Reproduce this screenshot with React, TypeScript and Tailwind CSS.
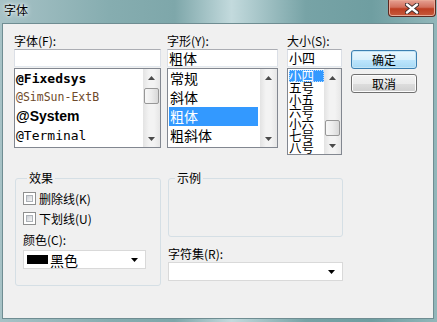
import React from 'react'

const cjk = "font-['Noto_Sans_CJK_SC',sans-serif]"

function Tri({ up = false, color = '#000' }: { up?: boolean; color?: string }) {
  return (
    <svg width="7" height="4" viewBox="0 0 7 4" className="block">
      <path d={up ? 'M3.5 0L7 4H0z' : 'M0 0h7L3.5 4z'} fill={color} />
    </svg>
  )
}

// win7 style vertical scrollbar, thumbClass carries the margin that places the thumb
function ScrollBar({ thumbClass }: { thumbClass?: string }) {
  return (
    <div className="flex w-[17px] flex-col bg-[linear-gradient(90deg,#e3e3e3,#f3f3f3_35%,#f3f3f3_65%,#e6e6e6)]">
      <div className="flex h-[17px] items-center justify-center">
        <Tri up color="#4a4a4a" />
      </div>
      <div className="flex-1">
        {thumbClass && (
          <div
            className={`mx-[1px] h-[16px] rounded-[2px] border border-[#979797] bg-[linear-gradient(90deg,#f7f7f7,#ececec_50%,#d8d8d8)] ${thumbClass}`}
          />
        )}
      </div>
      <div className="flex h-[17px] items-center justify-center">
        <Tri color="#4a4a4a" />
      </div>
    </div>
  )
}

function ListBox({ className, thumbClass, children }: { className: string; thumbClass?: string; children: React.ReactNode }) {
  return (
    <div className={`flex border border-[#828790] bg-white ${className}`}>
      <div className="flex-1 overflow-hidden">{children}</div>
      <ScrollBar thumbClass={thumbClass} />
    </div>
  )
}

function TextBox({ className, value }: { className: string; value?: string }) {
  return (
    <div
      className={`h-[18px] border border-[#abadb3] border-x-[#dbdfe6] border-b-[#e3e9ef] bg-white pl-[1px] text-[13px] leading-[16px] ${className}`}
    >
      {value}
    </div>
  )
}

function WinButton({ label, isDefault = false }: { label: string; isDefault?: boolean }) {
  return (
    <button
      className={`h-[19px] w-[66px] rounded-[3px] border text-[12px] leading-[17px] text-black ${
        isDefault
          ? 'border-[#3c7fb1] bg-[linear-gradient(180deg,#eaf6fd_0%,#d9f0fc_50%,#bee6fd_51%,#a7d9f5_100%)] shadow-[inset_0_0_0_1px_#c4e5f6]'
          : 'border-[#707070] bg-[linear-gradient(180deg,#f2f2f2_0%,#ebebeb_50%,#dddddd_51%,#cfcfcf_100%)] shadow-[inset_0_0_0_1px_#fcfcfc]'
      }`}
    >
      {label}
    </button>
  )
}

function CheckBox({ label }: { label: string }) {
  return (
    <div className="flex h-[13px] items-center gap-[3px]">
      <div className="h-[13px] w-[13px] border border-[#8e8f8f] bg-white p-[2px]">
        <div className="h-full w-full border border-[#aeb3b9] bg-[linear-gradient(135deg,#cbcfd5,#f6f6f6)]" />
      </div>
      <span className="text-[12px] leading-[13px]">{label}</span>
    </div>
  )
}

function Combo({ className, children }: { className: string; children?: React.ReactNode }) {
  return (
    <div className={`flex h-[19px] items-center border border-[#d9d9d9] bg-white pr-[7px] ${className}`}>
      <div className="flex flex-1 items-center">{children}</div>
      <Tri />
    </div>
  )
}

export default function App() {
  const fonts = [
    { name: '@Fixedsys', cls: "font-['DejaVu_Sans_Mono',monospace] font-bold text-[13px]" },
    { name: '@SimSun-ExtB', cls: "font-['DejaVu_Sans_Mono',monospace] text-[11.5px] text-[#6e4a2a]" },
    { name: '@System', cls: "font-['Liberation_Sans',sans-serif] font-bold text-[14px]" },
    { name: '@Terminal', cls: "font-['DejaVu_Sans_Mono',monospace] text-[13px]" },
  ]
  const styles = ['常规', '斜体', '粗体', '粗斜体']
  const sizes = ['小四', '五号', '小五', '六号', '小六', '七号', '八号']

  return (
    <div
      className={`flex h-[322px] w-[437px] flex-col overflow-hidden bg-[linear-gradient(90deg,#a7c2c6_0%,#86adb0_25%,#7ea7aa_40%,#c3dadd_53%,#77a3a6_70%,#6f9ea1_85%,#92b7ba_100%)] text-black ${cjk}`}
    >
      {/* title bar */}
      <div className="flex h-[23px] items-start justify-between">
        <span className="pl-[4px] pt-[3px] text-[12px] leading-[13px] [text-shadow:0_0_6px_#ffffff,0_0_3px_#ffffff]">字体</span>
        <div className="mr-[1px] flex h-[17px] w-[48px] items-center justify-center rounded-b-[4px] border border-t-0 border-[#5b2a22] bg-[linear-gradient(180deg,#e6a193_0%,#d2705c_45%,#bd3e22_55%,#c65a3c_100%)] shadow-[inset_0_0_0_1px_#e9a895]">
          <svg width="14" height="11" viewBox="0 0 14 11">
            <path d="M2 1.5L12 9.5M12 1.5L2 9.5" stroke="#3a2a2a" strokeWidth="4.2" strokeLinecap="round" />
            <path d="M2 1.5L12 9.5M12 1.5L2 9.5" stroke="#ffffff" strokeWidth="2.4" strokeLinecap="round" />
          </svg>
        </div>
      </div>

      {/* dialog body */}
      <div className="mb-[3px] ml-[2px] mr-[3px] flex-1 border border-[#6f8d92] bg-[#f0f0f0] pl-[11px] pt-[11px]">
        <div className="flex">
          <div className="flex w-[147px] flex-col">
            <div className="h-[14px] text-[12px] leading-[12px]">字体(F):</div>
            <TextBox className="w-[147px]" />
            <ListBox className="mt-[1px] h-[80px] w-[147px]" thumbClass="mt-[2px]">
              {fonts.map((f) => (
                <div key={f.name} className={`h-[19px] whitespace-nowrap pl-[1px] leading-[19px] ${f.cls}`}>
                  {f.name}
                </div>
              ))}
            </ListBox>
          </div>

          <div className="ml-[6px] flex w-[111px] flex-col">
            <div className="h-[14px] text-[12px] leading-[12px]">字形(Y):</div>
            <TextBox className="w-[111px] text-[14px]" value="粗体" />
            <ListBox className="mt-[1px] h-[80px] w-[111px]">
              <div className="pl-[1px] pr-[2px]">
                {styles.map((s) => (
                  <div
                    key={s}
                    className={`h-[19px] pl-[1px] text-[14px] leading-[19px] ${s === '粗体' ? 'bg-[#3399ff] text-white' : ''}`}
                  >
                    {s}
                  </div>
                ))}
              </div>
            </ListBox>
          </div>

          <div className="ml-[9px] flex w-[55px] flex-col">
            <div className="h-[14px] text-[12px] leading-[12px]">大小(S):</div>
            <TextBox className="w-[55px]" value="小四" />
            <ListBox className="mt-[1px] h-[87px] w-[55px]" thumbClass="mt-[34px]">
              <div className="pl-[1px] pt-[1px]">
                {sizes.map((s) => (
                  <div
                    key={s}
                    className={`h-[12px] text-[12.5px] leading-[12px] ${
                      s === '小四' ? 'bg-[#3399ff] text-white outline-1 outline-dotted outline-offset-[-1px] outline-[#b8dcff]' : ''
                    }`}
                  >
                    {s}
                  </div>
                ))}
              </div>
            </ListBox>
          </div>

          <div className="ml-[9px] flex flex-col gap-[5px] pt-[15px]">
            <WinButton label="确定" isDefault />
            <WinButton label="取消" />
          </div>
        </div>

        <div className="mt-[17px] flex">
          <fieldset className="ml-[1px] h-[114px] w-[146px] rounded-[3px] border border-[#d5dfe5] pl-[7px]">
            <legend className="ml-[4px] px-[2px] text-[12px] leading-[12px]">效果</legend>
            <div className="mt-[8px] flex flex-col gap-[7px]">
              <CheckBox label="删除线(K)" />
              <CheckBox label="下划线(U)" />
            </div>
            <div className="mt-[9px] text-[12px] leading-[12px]">颜色(C):</div>
            <Combo className="mt-[4px] w-[123px] pl-[3px]">
              <div className="h-[9px] w-[21px] bg-black" />
              <span className="ml-[2px] text-[14px] leading-[16px]">黑色</span>
            </Combo>
          </fieldset>

          <div className="ml-[7px] flex w-[175px] flex-col">
            <fieldset className="h-[65px] rounded-[3px] border border-[#d5dfe5]">
              <legend className="ml-[6px] px-[2px] text-[12px] leading-[12px]">示例</legend>
            </fieldset>
            <div className="mt-[11px] text-[12px] leading-[12px]">字符集(R):</div>
            <Combo className="mt-[2px] w-[175px]" />
          </div>
        </div>
      </div>
    </div>
  )
}
